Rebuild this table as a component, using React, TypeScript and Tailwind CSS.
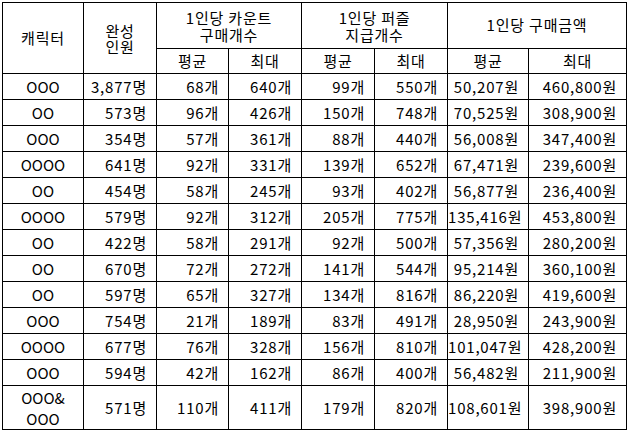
import React from "react";

const rows: string[][] = [
  ["OOO", "3,877명", "68개", "640개", "99개", "550개", "50,207원", "460,800원"],
  ["OO", "573명", "96개", "426개", "150개", "748개", "70,525원", "308,900원"],
  ["OOO", "354명", "57개", "361개", "88개", "440개", "56,008원", "347,400원"],
  ["OOOO", "641명", "92개", "331개", "139개", "652개", "67,471원", "239,600원"],
  ["OO", "454명", "58개", "245개", "93개", "402개", "56,877원", "236,400원"],
  ["OOOO", "579명", "92개", "312개", "205개", "775개", "135,416원", "453,800원"],
  ["OO", "422명", "58개", "291개", "92개", "500개", "57,356원", "280,200원"],
  ["OO", "670명", "72개", "272개", "141개", "544개", "95,214원", "360,100원"],
  ["OO", "597명", "65개", "327개", "134개", "816개", "86,220원", "419,600원"],
  ["OOO", "754명", "21개", "189개", "83개", "491개", "28,950원", "243,900원"],
  ["OOOO", "677명", "76개", "328개", "156개", "810개", "101,047원", "428,200원"],
  ["OOO", "594명", "42개", "162개", "86개", "400개", "56,482원", "211,900원"],
];

const last = ["571명", "110개", "411개", "179개", "820개", "108,601원", "398,900원"];

const cell = "border border-black p-0";
const num = "border border-black p-0 pr-[9px] text-right whitespace-nowrap leading-[20px]";

export default function App() {
  return (
    <div
      className="bg-white pt-[2px] pl-[2px] w-[628px] h-[433px] overflow-hidden text-black text-[15px] tracking-[0.8px]"
      style={{ fontFamily: '"Noto Sans CJK KR", sans-serif' }}
    >
      <table className="border-collapse table-fixed w-[624px]">
        <colgroup>
          <col className="w-[81px]" />
          <col className="w-[73px]" />
          <col className="w-[72px]" />
          <col className="w-[73px]" />
          <col className="w-[73px]" />
          <col className="w-[73px]" />
          <col className="w-[81px]" />
          <col className="w-[98px]" />
        </colgroup>
        <thead>
          <tr>
            <th rowSpan={2} className={`${cell} font-normal text-center align-middle`}>
              캐릭터
            </th>
            <th rowSpan={2} className={`${cell} font-normal text-center align-middle leading-[16px]`}>
              <div className="pt-[2px]">
                완성
                <br />
                인원
              </div>
            </th>
            <th colSpan={2} className={`${cell} h-[46px] font-normal text-center align-middle leading-[17px]`}>
              1인당 카운트
              <br />
              구매개수
            </th>
            <th colSpan={2} className={`${cell} font-normal text-center align-middle leading-[17px]`}>
              1인당 퍼즐
              <br />
              지급개수
            </th>
            <th colSpan={2} className={`${cell} font-normal text-center align-middle`}>
              1인당 구매금액
            </th>
          </tr>
          <tr>
            {["평균", "최대", "평균", "최대", "평균", "최대"].map((t, i) => (
              <th key={i} className={`${cell} h-[25px] font-normal text-center align-middle leading-[20px]`}>
                {t}
              </th>
            ))}
          </tr>
        </thead>
        <tbody>
          {rows.map((r, i) => (
            <tr key={i}>
              <td className={`${cell} h-[26px] text-center tracking-normal leading-[20px]`}>{r[0]}</td>
              {r.slice(1).map((v, j) => (
                <td key={j} className={num}>
                  {v}
                </td>
              ))}
            </tr>
          ))}
          <tr>
            <td className={`${cell} h-[44px] text-center tracking-normal leading-[21px]`}>
              OOO&amp;
              <br />
              OOO
            </td>
            {last.map((v, j) => (
              <td key={j} className={num}>
                {v}
              </td>
            ))}
          </tr>
        </tbody>
      </table>
    </div>
  );
}
